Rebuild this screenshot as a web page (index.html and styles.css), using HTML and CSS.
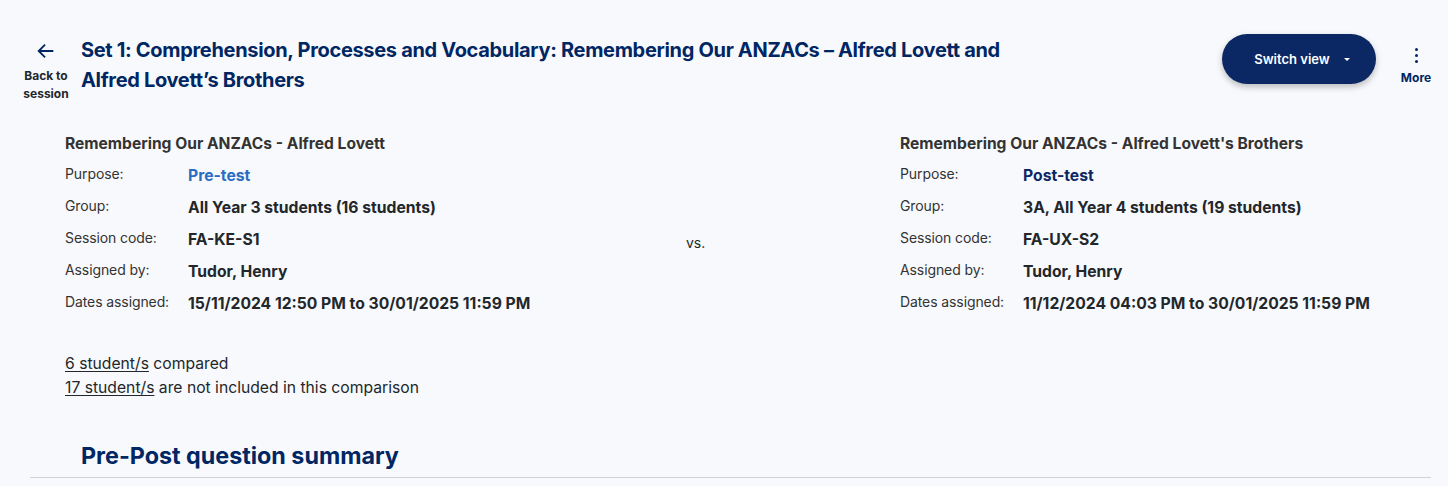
FILE: index.html
```html
<!DOCTYPE html>
<html lang="en">
<head>
<meta charset="utf-8">
<title>Pre-Post comparison</title>
<link rel="stylesheet" href="styles.css">
</head>
<body>
<div class="page">
  <header class="header">
    <a class="back" href="#">
      <svg class="back-icon" width="22" height="22" viewBox="0 0 24 24" aria-hidden="true"><path d="M20 12H5M11 5l-7 7 7 7" fill="none" stroke="#002664" stroke-width="2"/></svg>
      <span class="back-text">Back to session</span>
    </a>
    <h1 class="title">Set 1: Comprehension, Processes and Vocabulary: Remembering Our ANZACs – Alfred Lovett and Alfred Lovett’s Brothers</h1>
    <button class="switch">Switch view <span class="caret"></span></button>
    <a class="more" href="#">
      <span class="dots"><i></i><i></i><i></i></span>
      <span class="more-text">More</span>
    </a>
  </header>

  <section class="compare">
    <div class="panel panel-left">
      <h2 class="panel-title">Remembering Our ANZACs - Alfred Lovett</h2>
      <dl class="rows">
        <dt>Purpose:</dt><dd class="pre">Pre-test</dd>
        <dt>Group:</dt><dd>All Year 3 students (16 students)</dd>
        <dt>Session code:</dt><dd>FA-KE-S1</dd>
        <dt>Assigned by:</dt><dd>Tudor, Henry</dd>
        <dt>Dates assigned:</dt><dd>15/11/2024 12:50 PM to 30/01/2025 11:59 PM</dd>
      </dl>
    </div>
    <div class="vs">vs.</div>
    <div class="panel">
      <h2 class="panel-title">Remembering Our ANZACs - Alfred Lovett's Brothers</h2>
      <dl class="rows">
        <dt>Purpose:</dt><dd class="post">Post-test</dd>
        <dt>Group:</dt><dd>3A, All Year 4 students (19 students)</dd>
        <dt>Session code:</dt><dd>FA-UX-S2</dd>
        <dt>Assigned by:</dt><dd>Tudor, Henry</dd>
        <dt>Dates assigned:</dt><dd>11/12/2024 04:03 PM to 30/01/2025 11:59 PM</dd>
      </dl>
    </div>
  </section>

  <section class="counts">
    <p><a href="#">6 student/s</a> compared</p>
    <p><a href="#">17 student/s</a> are not included in this comparison</p>
  </section>

  <h2 class="summary">Pre-Post question summary</h2>
  <hr class="rule">
</div>
</body>
</html>
```

FILE: styles.css
```css
* { box-sizing: border-box; }
html, body { margin: 0; padding: 0; }
body {
  background: #f8f9fc;
  font-family: "Inter", "Noto Sans", sans-serif;
  color: #22272b;
  height: 486px;
  overflow: hidden;
}
.header {
  display: flex;
  align-items: flex-start;
  padding: 34px 12px 0 22px;
}
.back {
  width: 48px;
  display: flex;
  flex-direction: column;
  align-items: center;
  text-decoration: none;
  color: #22272b;
  margin-top: 6px;
}
.back-icon { display: block; }
.back-text {
  margin-top: 5px;
  font-size: 12px;
  font-weight: 700;
  line-height: 18px;
  text-align: center;
  width: 48px;
}
.title {
  margin: 1px 0 0 11px;
  width: 940px;
  font-size: 20px;
  line-height: 30px;
  font-weight: 700;
  color: #002664;
  letter-spacing: -0.32px;
}
.switch {
  margin-left: auto;
  width: 154px;
  height: 50px;
  border: 0;
  border-radius: 25px;
  background: #0b2865;
  color: #fff;
  font-family: inherit;
  font-size: 13px;
  font-weight: 600;
  padding: 0 0 0 6px;
  box-shadow: 0 3px 6px rgba(0,0,0,0.25);
  display: flex;
  align-items: center;
  justify-content: center;
  gap: 14px;
}
.caret {
  width: 0; height: 0;
  border-left: 3px solid transparent;
  border-right: 3px solid transparent;
  border-top: 3px solid #fff;
}
.more {
  width: 40px;
  margin-left: 20px;
  margin-top: 14px;
  display: flex;
  flex-direction: column;
  align-items: center;
  text-decoration: none;
  color: #002664;
}
.dots { display: flex; flex-direction: column; gap: 3px; }
.dots i { width: 3px; height: 3px; border-radius: 50%; background: #002664; display: block; }
.more-text { margin-top: 7px; font-size: 12px; font-weight: 700; line-height: 16px; }

.compare {
  display: flex;
  align-items: center;
  padding: 0 0 0 65px;
  margin-top: 32px;
}
.panel-left { width: 621px; }
.vs { width: 214px; font-size: 14px; padding-top: 30px; }
.panel-title {
  margin: 0 0 7px;
  font-size: 15.6px;
  font-weight: 700;
  line-height: 18px;
  color: #333;
}
.rows {
  margin: 0;
  display: grid;
  grid-template-columns: 123px auto;
  grid-auto-rows: 32px;
  align-items: center;
}
.rows dt { font-size: 14px; color: #333; line-height: 20px; margin-top: -4px; letter-spacing: -0.1px; }
.rows dd { margin: 0; font-size: 15.7px; font-weight: 700; color: #22272b; line-height: 20px; }
.rows dd.pre { color: #2b6dc2; }
.rows dd.post { color: #0b2865; }

.counts { padding-left: 65px; margin-top: 32px; }
.counts p { margin: 0; font-size: 15.7px; line-height: 24px; color: #22272b; }
.counts a { color: #22272b; text-decoration: underline; text-underline-offset: 2px; }

.summary {
  margin: 41px 0 0 81px;
  font-size: 23.3px;
  line-height: 30px;
  font-weight: 700;
  color: #002664;
}
.rule {
  margin: 6px 17px 0 30px;
  border: 0;
  border-top: 1px solid #d0d2d6;
}
```
